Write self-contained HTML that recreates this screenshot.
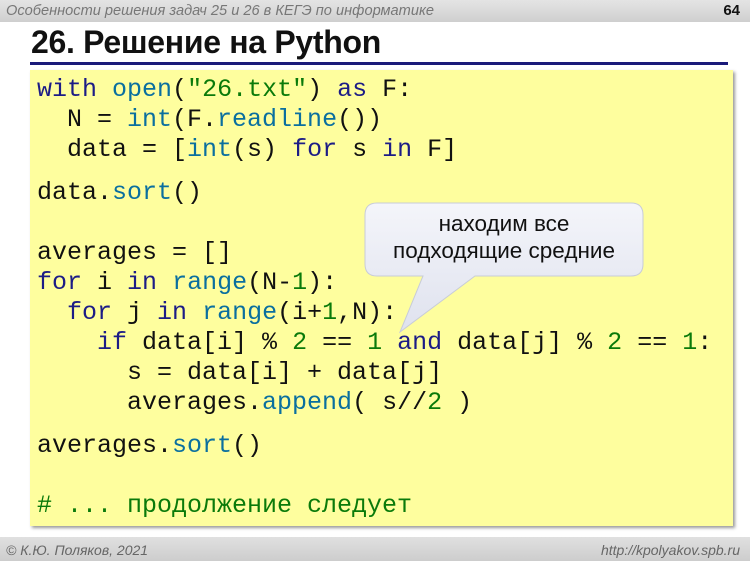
<!DOCTYPE html>
<html><head><meta charset="utf-8"><style>
body{margin:0;width:750px;height:561px;background:#fff;position:relative;overflow:hidden;font-family:"Liberation Sans",sans-serif}
.hdr{position:absolute;left:0;top:0;width:750px;height:22px;background:linear-gradient(#e4e4e4,#cfcfcf)}
.hdr i{position:absolute;left:6px;top:3px;font-size:14.6px;color:#777}
.hdr b{position:absolute;right:10px;top:2px;font-size:15px;color:#111}
h1{position:absolute;left:31px;top:24px;margin:0;font-size:32px;font-weight:bold;color:#111;letter-spacing:-0.3px}
.line{position:absolute;left:30px;top:62px;width:698px;height:3px;background:#1a1a7a}
.box{position:absolute;left:30px;top:70px;width:703px;height:456px;background:#fefe9e;box-shadow:2px 2px 3px #999}
pre{position:absolute;left:37px;margin:0;font-family:"Liberation Mono",monospace;font-size:25px;line-height:30px;color:#111}
.k{color:#1c1c86}.f{color:#0a6f9f}.s{color:#0a7a0a}
.ftr{position:absolute;left:0;top:537px;width:750px;height:24px;background:linear-gradient(#e0e0e0,#cdcdcd)}
.ftr i{position:absolute;top:5px;font-size:14px;color:#666}
</style></head><body>
<div class="hdr"><i>Особенности решения задач 25 и 26 в КЕГЭ по информатике</i><b>64</b></div>
<h1>26. Решение на Python</h1>
<div class="line"></div>
<div class="box"></div>
<pre style="top:75px"><span class="k">with</span> <span class="f">open</span>(<span class="s">"26.txt"</span>) <span class="k">as</span> F:
  N = <span class="f">int</span>(F.<span class="f">readline</span>())
  data = [<span class="f">int</span>(s) <span class="k">for</span> s <span class="k">in</span> F]</pre>
<pre style="top:178px">data.<span class="f">sort</span>()

averages = []
<span class="k">for</span> i <span class="k">in</span> <span class="f">range</span>(N-<span class="s">1</span>):
  <span class="k">for</span> j <span class="k">in</span> <span class="f">range</span>(i+<span class="s">1</span>,N):
    <span class="k">if</span> data[i] % <span class="s">2</span> == <span class="s">1</span> <span class="k">and</span> data[j] % <span class="s">2</span> == <span class="s">1</span>:
      s = data[i] + data[j]
      averages.<span class="f">append</span>( s//<span class="s">2</span> )</pre>
<pre style="top:431px">averages.<span class="f">sort</span>()

<span class="s"># ... продолжение следует</span></pre>
<svg style="position:absolute;left:355px;top:198px" width="300" height="140">
<defs><linearGradient id="g" x1="0" y1="0" x2="0" y2="1"><stop offset="0" stop-color="#f4f5fa"/><stop offset="1" stop-color="#dfe2ee"/></linearGradient></defs>
<path d="M22 5 H276 Q288 5 288 17 V66 Q288 78 276 78 H120 L45 134 L68 78 H22 Q10 78 10 66 V17 Q10 5 22 5 Z" fill="url(#g)" stroke="#c8ccd8" stroke-width="1"/>
<text x="149" y="33" text-anchor="middle" font-family="Liberation Sans" font-size="22.5" fill="#111">находим все</text>
<text x="149" y="60" text-anchor="middle" font-family="Liberation Sans" font-size="22.5" fill="#111">подходящие средние</text>
</svg>
<div class="ftr"><i style="left:6px">© К.Ю. Поляков, 2021</i><i style="right:10px">http://kpolyakov.spb.ru</i></div>
</body></html>
